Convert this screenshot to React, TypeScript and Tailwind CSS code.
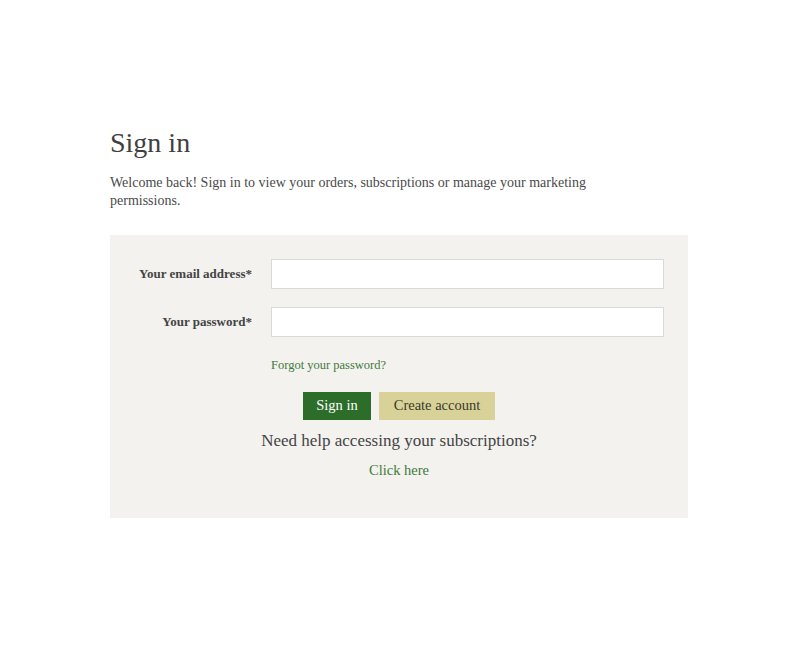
export default function App() {
  const serif = { fontFamily: '"Liberation Serif", "DejaVu Serif", serif' };
  return (
    <div className="w-[800px] h-[652px] bg-white" style={serif}>
      <div className="pl-[110px] pt-[126px] w-[688px]">
        <h1 className="text-[28px] leading-[34px] text-[#3f3f3f]">Sign in</h1>
        <p className="mt-[14px] text-[14px] leading-[18px] text-[#4a4a4a] w-[520px]">
          Welcome back! Sign in to view your orders, subscriptions or manage your marketing permissions.
        </p>
        <div className="mt-[25px] w-[578px] h-[283px] bg-[#f3f2ef] pt-[24px]">
          <div className="flex items-center">
            <label className="w-[142px] text-right text-[13px] font-bold text-[#444]">Your email address*</label>
            <input className="ml-[19px] w-[393px] h-[30px] bg-white border border-[#d9d9d6]" />
          </div>
          <div className="flex items-center mt-[18px]">
            <label className="w-[142px] text-right text-[13px] font-bold text-[#444]">Your password*</label>
            <input type="password" className="ml-[19px] w-[393px] h-[30px] bg-white border border-[#d9d9d6]" />
          </div>
          <div className="pl-[161px] mt-[19px] text-[12.5px] text-[#3f7a3a]">Forgot your password?</div>
          <div className="flex justify-center gap-[8px] mt-[17px]">
            <button className="w-[68px] h-[28px] bg-[#2c6e29] text-white text-[14.5px]">Sign in</button>
            <button className="w-[116px] h-[28px] bg-[#d8d298] text-[#3a3a2a] text-[14.5px]">Create account</button>
          </div>
          <div className="text-center mt-[8px] text-[17px] text-[#444]">Need help accessing your subscriptions?</div>
          <div className="text-center mt-[7px] text-[14.5px] text-[#3f7a3a]">Click here</div>
        </div>
      </div>
    </div>
  );
}
